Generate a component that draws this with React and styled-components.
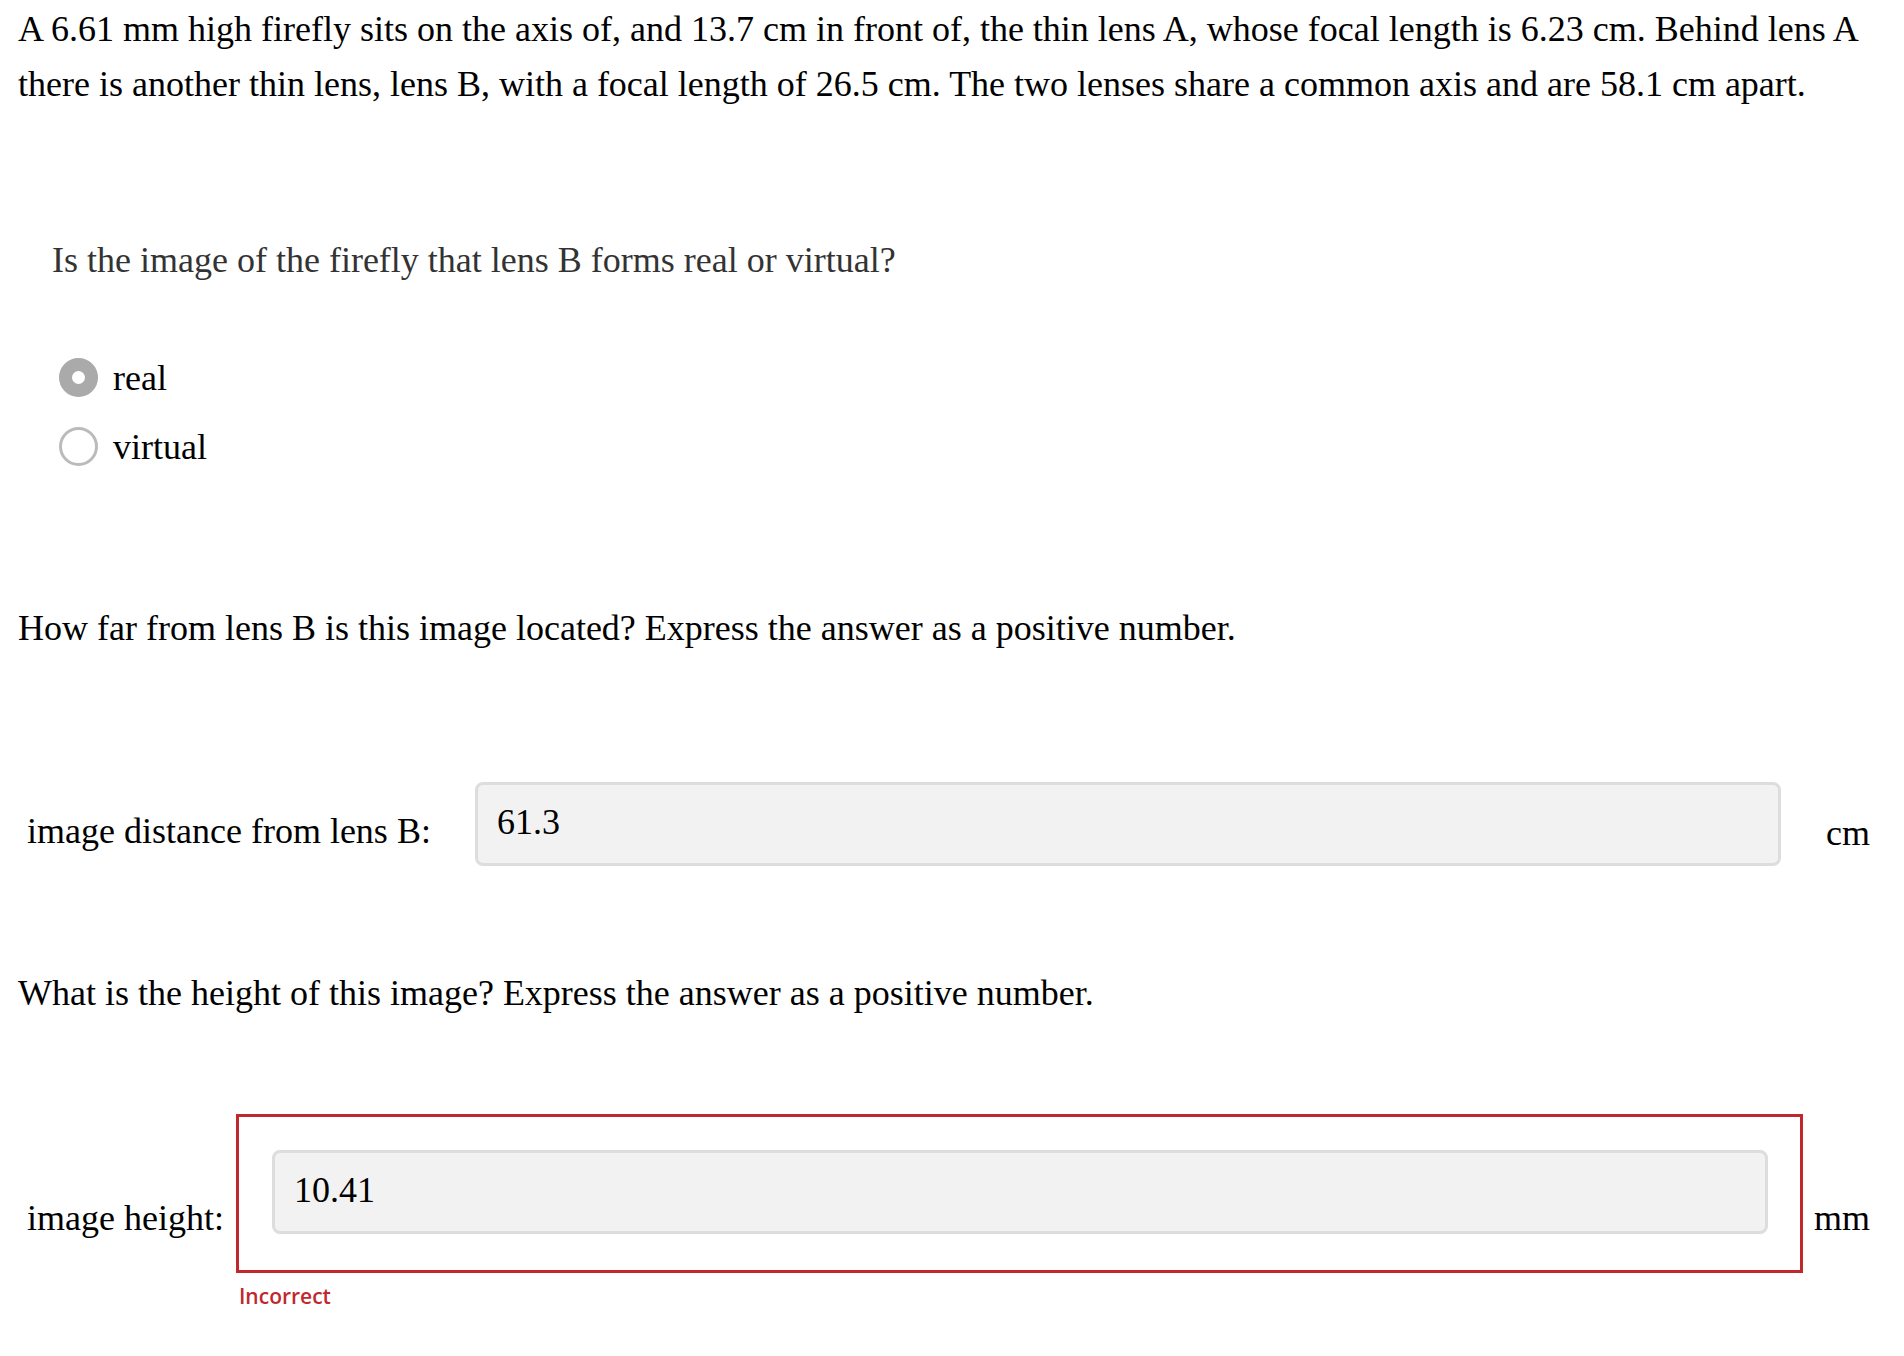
import React from "react";
import styled, { createGlobalStyle } from "styled-components";

const GlobalStyle = createGlobalStyle`
  body {
    margin: 0;
    background: #ffffff;
    font-family: "Liberation Serif", "Times New Roman", serif;
    color: #000;
  }
`;

const Page = styled.div`
  padding: 2px 34px 40px 18px;
  font-size: 36px;
`;

const Intro = styled.p`
  margin: 0;
  line-height: 55px;
`;

const SubQuestion = styled.p`
  margin: ${(p) => p.$margin || "0"};
  line-height: 54px;
  color: ${(p) => (p.$muted ? "#333333" : "#000000")};
  padding-left: ${(p) => p.$indent || 0}px;
`;

const RadioList = styled.div`
  display: flex;
  flex-direction: column;
  padding-left: 41px;
  margin-top: 56px;
`;

const RadioRow = styled.label`
  display: flex;
  align-items: center;
  gap: 15px;
  height: 69px;
  line-height: 1;
`;

const RadioDot = styled.span`
  width: 39px;
  height: 39px;
  box-sizing: border-box;
  border-radius: 50%;
  border: ${(p) => (p.$checked ? "13px solid #aaaaaa" : "3px solid #bbbbbb")};
  background: #ffffff;
  flex-shrink: 0;
`;

const AnswerRow = styled.div`
  display: flex;
  align-items: center;
  margin-top: ${(p) => p.$top}px;
`;

const RowLabel = styled.span`
  padding-left: 9px;
  padding-top: ${(p) => p.$drop}px;
  white-space: nowrap;
  margin-right: ${(p) => p.$after}px;
`;

const Unit = styled.span`
  padding-top: ${(p) => p.$drop}px;
  margin-left: ${(p) => p.$before}px;
  white-space: nowrap;
`;

const FieldBox = styled.div`
  flex: 1;
  display: flex;
  border: ${(p) => (p.$wrong ? "3px solid #c0282d" : "none")};
  padding: ${(p) => (p.$wrong ? "33px 32px 36px 33px" : "0")};
  position: relative;
`;

const Field = styled.div`
  flex: 1;
  height: 84px;
  box-sizing: border-box;
  background: #f2f2f2;
  border: 3px solid #dddddd;
  border-radius: 8px;
  padding: 0 0 4px 19px;
  display: flex;
  align-items: center;
  font-size: 36px;
`;

const Feedback = styled.div`
  position: absolute;
  left: 0;
  top: calc(100% + 12px);
  font-family: "Open Sans", "Noto Sans", sans-serif;
  font-weight: 600;
  font-size: 21px;
  color: #c0282d;
`;

export default function App() {
  return (
    <>
      <GlobalStyle />
      <Page>
        <Intro>
          A 6.61 mm high firefly sits on the axis of, and 13.7 cm in front of, the thin lens A, whose
          focal length is 6.23 cm. Behind lens A there is another thin lens, lens B, with a focal
          length of 26.5 cm. The two lenses share a common axis and are 58.1 cm apart.
        </Intro>

        <SubQuestion $muted $indent={34} $margin="121px 0 0 0">
          Is the image of the firefly that lens B forms real or virtual?
        </SubQuestion>

        <RadioList>
          <RadioRow>
            <RadioDot $checked />
            real
          </RadioRow>
          <RadioRow>
            <RadioDot />
            virtual
          </RadioRow>
        </RadioList>

        <SubQuestion $margin="120px 0 0 0">
          How far from lens B is this image located? Express the answer as a positive number.
        </SubQuestion>

        <AnswerRow $top={127}>
          <RowLabel $drop={13} $after={44}>image distance from lens B:</RowLabel>
          <FieldBox>
            <Field>61.3</Field>
          </FieldBox>
          <Unit $drop={17} $before={45}>cm</Unit>
        </AnswerRow>

        <SubQuestion $margin="100px 0 0 0">
          What is the height of this image? Express the answer as a positive number.
        </SubQuestion>

        <AnswerRow $top={94}>
          <RowLabel $drop={49} $after={12}>image height:</RowLabel>
          <FieldBox $wrong>
            <Field>10.41</Field>
            <Feedback>Incorrect</Feedback>
          </FieldBox>
          <Unit $drop={49} $before={11}>mm</Unit>
        </AnswerRow>
      </Page>
    </>
  );
}
